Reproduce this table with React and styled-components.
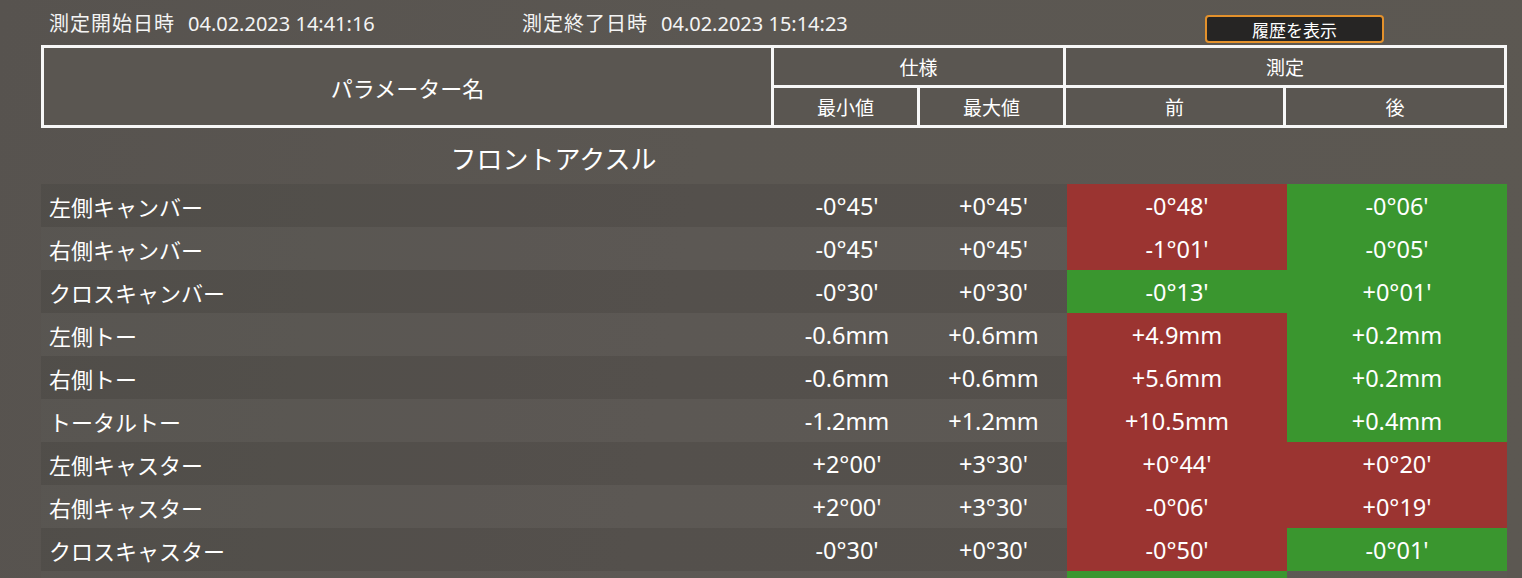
import React from 'react';
import styled, { createGlobalStyle } from 'styled-components';

const rows = [
  { name: '左側キャンバー', min: "-0°45'", max: "+0°45'", before: "-0°48'", after: "-0°06'", b: 'bad', a: 'good' },
  { name: '右側キャンバー', min: "-0°45'", max: "+0°45'", before: "-1°01'", after: "-0°05'", b: 'bad', a: 'good' },
  { name: 'クロスキャンバー', min: "-0°30'", max: "+0°30'", before: "-0°13'", after: "+0°01'", b: 'good', a: 'good' },
  { name: '左側トー', min: '-0.6mm', max: '+0.6mm', before: '+4.9mm', after: '+0.2mm', b: 'bad', a: 'good' },
  { name: '右側トー', min: '-0.6mm', max: '+0.6mm', before: '+5.6mm', after: '+0.2mm', b: 'bad', a: 'good' },
  { name: 'トータルトー', min: '-1.2mm', max: '+1.2mm', before: '+10.5mm', after: '+0.4mm', b: 'bad', a: 'good' },
  { name: '左側キャスター', min: "+2°00'", max: "+3°30'", before: "+0°44'", after: "+0°20'", b: 'bad', a: 'bad' },
  { name: '右側キャスター', min: "+2°00'", max: "+3°30'", before: "-0°06'", after: "+0°19'", b: 'bad', a: 'bad' },
  { name: 'クロスキャスター', min: "-0°30'", max: "+0°30'", before: "-0°50'", after: "-0°01'", b: 'bad', a: 'good' },
  // next row only peeks in at the bottom edge
  { name: '', min: '', max: '', before: '', after: '', b: 'good', a: 'none' },
];

function App() {
  return (
    <Page>
      <GlobalStyle />
      <TopBar>
        <InfoGroup width={473}>
          <Label>測定開始日時</Label>
          <span>04.02.2023 14:41:16</span>
        </InfoGroup>
        <InfoGroup width={683}>
          <Label>測定終了日時</Label>
          <span>04.02.2023 15:14:23</span>
        </InfoGroup>
        <HistoryButton>履歴を表示</HistoryButton>
      </TopBar>

      <HeaderGrid>
        <HeadCell rowSpan2 big>パラメーター名</HeadCell>
        <HeadCell span={2}>仕様</HeadCell>
        <HeadCell span={2}>測定</HeadCell>
        <HeadCell>最小値</HeadCell>
        <HeadCell>最大値</HeadCell>
        <HeadCell>前</HeadCell>
        <HeadCell>後</HeadCell>
      </HeaderGrid>

      <SectionTitle>フロントアクスル</SectionTitle>

      {rows.map((r, i) => (
        <DataRow key={i} dark={i % 2 === 0}>
          <NameCell>{r.name}</NameCell>
          <ValueCell>{r.min}</ValueCell>
          <ValueCell>{r.max}</ValueCell>
          <ValueCell status={r.b}>{r.before}</ValueCell>
          <ValueCell status={r.a}>{r.after}</ValueCell>
        </DataRow>
      ))}
    </Page>
  );
}

const GlobalStyle = createGlobalStyle`
  html, body {
    margin: 0;
    padding: 0;
    overflow: hidden;
    background: #5a5650;
  }
  body {
    font-family: "Noto Sans", "Noto Sans CJK JP", sans-serif;
    color: #fff;
  }
`;

const Page = styled.div`
  width: 1522px;
  height: 578px;
  overflow: hidden;
  background: linear-gradient(100deg, #57534f 0%, #5b5752 45%, #5c5852 100%);
`;

const TopBar = styled.div`
  display: flex;
  align-items: flex-start;
  height: 45px;
  padding-left: 49px;
`;

const InfoGroup = styled.div`
  display: flex;
  gap: 13px;
  width: ${(p) => p.width}px;
  padding-top: 10px;
  font-size: 20px;
  line-height: 28px;
  color: #f4f4f4;
`;

const Label = styled.span`
  letter-spacing: 1px;
`;

const HistoryButton = styled.div`
  box-sizing: border-box;
  width: 179px;
  height: 28px;
  margin-top: 15px;
  display: flex;
  align-items: center;
  justify-content: center;
  background: #262524;
  border: 2px solid #e3912c;
  border-radius: 4px;
  font-size: 17px;
  color: #fff;
`;

const HeaderGrid = styled.div`
  display: grid;
  grid-template-columns: 727px 143px 143px 217px 218px;
  grid-template-rows: 37px 37px;
  gap: 3px;
  padding: 3px;
  margin-left: 41px;
  width: max-content;
  background: #f7f7f7;
`;

const HeadCell = styled.div`
  display: flex;
  align-items: center;
  justify-content: center;
  background: #5a5651;
  font-size: ${(p) => (p.big ? 22 : 19)}px;
  grid-column: ${(p) => (p.span ? `span ${p.span}` : 'auto')};
  grid-row: ${(p) => (p.rowSpan2 ? 'span 2' : 'auto')};
`;

const SectionTitle = styled.div`
  width: 1025px;
  margin-left: 41px;
  height: 56px;
  display: flex;
  align-items: center;
  justify-content: center;
  padding-top: 4px;
  box-sizing: border-box;
  font-size: 26px;
`;

const DataRow = styled.div`
  display: grid;
  grid-template-columns: 733px 146px 147px 220px 220px;
  height: 43px;
  margin-left: 41px;
  width: max-content;
  background: ${(p) => (p.dark ? 'rgba(0, 0, 0, 0.07)' : 'rgba(255, 255, 255, 0.01)')};
`;

const NameCell = styled.div`
  display: flex;
  align-items: center;
  padding-left: 8px;
  font-size: 22px;
`;

const statusColors = {
  bad: '#9b3431',
  good: '#3a962f',
};

const ValueCell = styled.div`
  display: flex;
  align-items: center;
  justify-content: center;
  font-size: 23.5px;
  background: ${(p) => statusColors[p.status] || 'transparent'};
`;

export default App;
